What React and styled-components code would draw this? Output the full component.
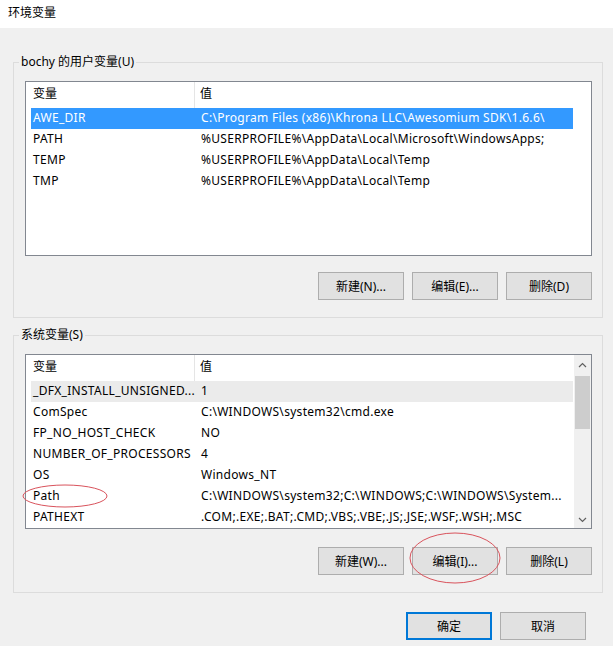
import styled, { createGlobalStyle } from 'styled-components';

const GlobalStyle = createGlobalStyle`
  html, body {
    margin: 0;
    padding: 0;
    background: #f0f0f0;
  }
  body {
    font-family: "Noto Sans", "Noto Sans CJK SC", sans-serif;
    font-size: 12px;
    color: #000;
  }
`;

const Window = styled.div`
  position: relative;
  width: 613px;
  height: 646px;
  background: #f0f0f0;
  overflow: hidden;
`;
const TitleBar = styled.div`
  height: 28px;
  box-sizing: border-box;
  padding-left: 8px;
  line-height: 26px;
  background: #fff;
`;
const Body = styled.div`
  padding: 0 10px 0 13px;
`;
const Group = styled.fieldset`
  margin: ${p => p.$top}px 0 0;
  padding: ${p => p.$padTop}px 10px 17px 11px;
  border: 1px solid #dcdcdc;
  min-width: 0;
`;
const Legend = styled.legend`
  margin-left: -6px;
  padding: 0 2px;
  line-height: 16px;
`;
const List = styled.div`
  display: flex;
  height: 175px;
  box-sizing: border-box;
  border: 1px solid #828790;
  background: #fff;
  overflow: hidden;
`;
const ListBody = styled.div`
  flex: 1;
  min-width: 0;
`;
const Header = styled.div`
  display: grid;
  grid-template-columns: 164px 1fr;
  height: 26px;
  margin-left: 5px;
  width: 542px;
`;
const HeadCell = styled.div`
  padding-left: ${p => p.$pad}px;
  line-height: 23px;
  border-right: ${p => (p.$sep ? '1px solid #e5e5e5' : 'none')};
`;
const Row = styled.div`
  display: grid;
  grid-template-columns: 168px 1fr;
  height: 21px;
  line-height: 20px;
  margin-left: 5px;
  width: 542px;
  background: ${p => (p.$selected ? '#3399ff' : p.$hover ? '#ebebeb' : 'transparent')};
  color: ${p => (p.$selected ? '#fff' : '#000')};
`;
const Cell = styled.div`
  padding-left: 2px;
  white-space: nowrap;
  overflow: hidden;
  letter-spacing: 0.3px;
`;
const ScrollBar = styled.div`
  width: 17px;
  display: flex;
  flex-direction: column;
  background: #f0f0f0;
`;
const Arrow = styled.div`
  height: ${p => p.$h}px;
  display: flex;
  align-items: center;
  justify-content: center;
`;
const Track = styled.div`
  flex: 1;
`;
const Thumb = styled.div`
  height: 53px;
  margin: 1px 1px 0;
  background: #cdcdcd;
`;
const ButtonRow = styled.div`
  display: flex;
  justify-content: flex-end;
  gap: 8px;
  margin-top: ${p => p.$gap}px;
  padding-right: ${p => p.$right || 0}px;
`;
const Button = styled.button`
  width: 86px;
  height: 28px;
  box-sizing: border-box;
  padding: 0;
  border: ${p => (p.$default ? '2px solid #0078d7' : '1px solid #adadad')};
  background: #e1e1e1;
  font-family: inherit;
  font-size: 12px;
  color: #000;
`;
const Marks = styled.svg`
  position: absolute;
  left: 0;
  top: 0;
  pointer-events: none;
`;

const userVars = [
  ['AWE_DIR', 'C:\\Program Files (x86)\\Khrona LLC\\Awesomium SDK\\1.6.6\\'],
  ['PATH', '%USERPROFILE%\\AppData\\Local\\Microsoft\\WindowsApps;'],
  ['TEMP', '%USERPROFILE%\\AppData\\Local\\Temp'],
  ['TMP', '%USERPROFILE%\\AppData\\Local\\Temp'],
];

const sysVars = [
  ['_DFX_INSTALL_UNSIGNED...', '1'],
  ['ComSpec', 'C:\\WINDOWS\\system32\\cmd.exe'],
  ['FP_NO_HOST_CHECK', 'NO'],
  ['NUMBER_OF_PROCESSORS', '4'],
  ['OS', 'Windows_NT'],
  ['Path', 'C:\\WINDOWS\\system32;C:\\WINDOWS;C:\\WINDOWS\\System...'],
  ['PATHEXT', '.COM;.EXE;.BAT;.CMD;.VBS;.VBE;.JS;.JSE;.WSF;.WSH;.MSC'],
];

const Chevron = ({ up }) => (
  <svg width="9" height="6" viewBox="0 0 9 6">
    <polyline
      points={up ? '1,5 4.5,1.5 8,5' : '1,1 4.5,4.5 8,1'}
      fill="none"
      stroke="#606060"
      strokeWidth="1.2"
    />
  </svg>
);

const VarList = ({ rows, selected, hover, scroll }) => (
  <List>
    <ListBody>
      <Header>
        <HeadCell $pad={2} $sep>变量</HeadCell>
        <HeadCell $pad={5}>值</HeadCell>
      </Header>
      {rows.map(([name, value], i) => (
        <Row key={name} $selected={i === selected} $hover={i === hover}>
          <Cell>{name}</Cell>
          <Cell>{value}</Cell>
        </Row>
      ))}
    </ListBody>
    {scroll && (
      <ScrollBar>
        <Arrow $h={20}><Chevron up /></Arrow>
        <Track><Thumb /></Track>
        <Arrow $h={17}><Chevron /></Arrow>
      </ScrollBar>
    )}
  </List>
);

const App = () => {
  return (
    <Window>
      <GlobalStyle />
      <TitleBar>环境变量</TitleBar>
      <Body>
        <Group $top={26} $padTop={11}>
          <Legend>bochy 的用户变量(U)</Legend>
          <VarList rows={userVars} selected={0} />
          <ButtonRow $gap={16}>
            <Button>新建(N)...</Button>
            <Button>编辑(E)...</Button>
            <Button>删除(D)</Button>
          </ButtonRow>
        </Group>
        <Group $top={9} $padTop={11}>
          <Legend>系统变量(S)</Legend>
          <VarList rows={sysVars} hover={0} scroll />
          <ButtonRow $gap={18}>
            <Button>新建(W)...</Button>
            <Button>编辑(I)...</Button>
            <Button>删除(L)</Button>
          </ButtonRow>
        </Group>
        <ButtonRow $gap={19} $right={17}>
          <Button $default>确定</Button>
          <Button>取消</Button>
        </ButtonRow>
      </Body>
      <Marks width="613" height="646">
        <ellipse cx="65" cy="496" rx="42" ry="11" fill="none" stroke="#d9535c" strokeWidth="1" />
        <ellipse cx="455" cy="558" rx="45" ry="25" fill="none" stroke="#d9535c" strokeWidth="1" />
      </Marks>
    </Window>
  );
};

export default App;
